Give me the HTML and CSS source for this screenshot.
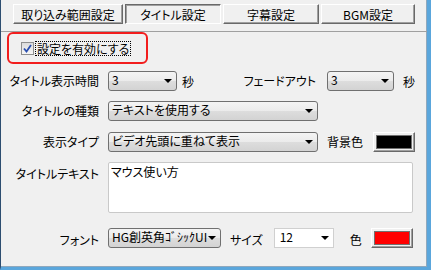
FILE: index.html
```html
<!DOCTYPE html>
<html lang="ja">
<head>
    <meta charset="UTF-8">
    <title>タイトル設定</title>
    <link rel="stylesheet" href="styles.css">
</head>
<body>
    <div class="window">
        <div class="tabs">
            <button class="tab tab-wide">取り込み範囲設定</button>
            <button class="tab tab-on">タイトル設定</button>
            <button class="tab">字幕設定</button>
            <button class="tab tab-last">BGM設定</button>
        </div>

        <div class="enable-box">
            <span class="check">
                <svg width="9" height="9" viewBox="0 0 9 9"><path d="M1 4.5 L3.5 7.5 L8 1" fill="none" stroke="#2a4fb0" stroke-width="1.8"/></svg>
            </span>
            <span class="check-text">設定を有効にする</span>
        </div>

        <div class="row">
            <span class="label">タイトル表示時間</span>
            <div class="combo combo-time"><span>3</span><i class="arrow"></i></div>
            <span class="unit">秒</span>
            <span class="label label-fade">フェードアウト</span>
            <div class="combo combo-fade"><span>3</span><i class="arrow"></i></div>
            <span class="unit unit-fade">秒</span>
        </div>

        <div class="row row-2">
            <span class="label">タイトルの種類</span>
            <div class="combo combo-long"><span>テキストを使用する</span><i class="arrow"></i></div>
        </div>

        <div class="row row-3">
            <span class="label">表示タイプ</span>
            <div class="combo combo-long"><span>ビデオ先頭に重ねて表示</span><i class="arrow"></i></div>
            <span class="side-text">背景色</span>
            <button class="swatch"><span class="swatch-fill black"></span></button>
        </div>

        <div class="row row-text">
            <span class="label label-top">タイトルテキスト</span>
            <div class="textbox">マウス使い方</div>
        </div>

        <div class="row row-font">
            <span class="label label-low">フォント</span>
            <div class="combo combo-font"><span>HG創英角ｺﾞｼｯｸUI</span><i class="arrow"></i></div>
            <span class="side-text label-low">サイズ</span>
            <div class="combo combo-size"><span>12</span><i class="arrow"></i></div>
            <span class="color-text label-low">色</span>
            <button class="swatch"><span class="swatch-fill red"></span></button>
        </div>
    </div>
</body>
</html>
```

FILE: styles.css
```css
body {
    margin: 0;
    padding: 0;
    background-color: #f0f0f0;
    font-family: "Noto Sans CJK JP", "Noto Sans", sans-serif;
    font-size: 12px;
    color: #000000;
}

.window {
    width: 431px;
    height: 270px;
    box-sizing: border-box;
    border-left: 1px solid #2d4d70;
    border-right: 4px solid #5aa6dc;
    border-bottom: 3px solid #5aa6dc;
    box-shadow: inset -1px -1px 0 #8fa8bd;
}

.tabs {
    display: flex;
    gap: 2px;
    height: 32px;
    box-sizing: border-box;
    padding: 4px 0 0 12px;
    border-bottom: 1px solid #a0a0a0;
}

.tab {
    width: 96px;
    height: 20px;
    padding: 0;
    background-color: #f0f0f0;
    border: 1px solid;
    border-color: #ffffff #696969 #696969 #ffffff;
    box-shadow: inset -1px -1px 0 #a0a0a0;
    font-family: inherit;
    font-size: 12px;
    line-height: 17px;
    font-feature-settings: "palt";
}

.tab-wide {
    width: 110px;
}

.tab-on {
    border-color: #696969 #ffffff #ffffff #696969;
    box-shadow: inset 1px 1px 0 #a0a0a0;
}

.tab-last {
    width: 94px;
}

.enable-box {
    display: flex;
    align-items: center;
    width: 141px;
    height: 32px;
    box-sizing: border-box;
    margin-left: 6px;
    padding-left: 12px;
    border: 2px solid #f21d1d;
    border-radius: 6px;
}

.check {
    display: flex;
    align-items: center;
    justify-content: center;
    width: 11px;
    height: 11px;
    border: 1px solid #8e8f8f;
    background: linear-gradient(#dcdcdc, #f6f6f6);
}

.check-text {
    margin-left: 2px;
    padding: 0 1px;
    line-height: 13px;
    outline: 1px dotted #000000;
    font-feature-settings: "palt";
}

.row {
    display: flex;
    align-items: center;
    height: 20px;
    margin-top: 7px;
}

.row-2 {
    margin-top: 10px;
}

.row-3 {
    margin-top: 11px;
}

.row-text {
    align-items: flex-start;
    height: 51px;
    margin-top: 10px;
}

.row-font {
    margin-top: 15px;
}

.label {
    width: 107px;
    box-sizing: border-box;
    padding-right: 9px;
    text-align: right;
    line-height: 14px;
    font-feature-settings: "palt";
}

.label-top {
    padding-top: 5px;
}

.label-low {
    padding-top: 4px;
}

.label-fade {
    width: 133px;
    padding-right: 11px;
}

.unit {
    width: 12px;
    margin-left: 5px;
}

.unit-fade {
    margin-left: 9px;
}

.combo {
    display: flex;
    align-items: center;
    justify-content: space-between;
    height: 20px;
    box-sizing: border-box;
    padding: 0 4px 0 3px;
    border: 1px solid #707070;
    border-radius: 3px;
    background: linear-gradient(#f4f4f4, #ebebeb 50%, #dddddd 51%, #d3d3d3);
    font-feature-settings: "palt";
    line-height: 14px;
    white-space: nowrap;
}

.combo span {
    margin-top: -2px;
}

.combo-time {
    width: 69px;
}

.combo-fade {
    width: 67px;
}

.combo-long {
    width: 210px;
}

.combo-font {
    width: 113px;
}

.combo-size {
    width: 60px;
    margin-left: 11px;
    border-color: #d0d0d0;
    border-radius: 0;
    background: #ffffff;
    padding-left: 5px;
}

.arrow {
    flex-shrink: 0;
    width: 0;
    height: 0;
    border-left: 4px solid transparent;
    border-right: 4px solid transparent;
    border-top: 4px solid #000000;
}

.side-text {
    margin-left: 9px;
    line-height: 14px;
    font-feature-settings: "palt";
}

.color-text {
    margin-left: 16px;
    line-height: 14px;
}

.swatch {
    display: flex;
    width: 42px;
    height: 20px;
    padding: 2px;
    margin-left: 10px;
    box-sizing: border-box;
    background-color: #f0f0f0;
    border: 1px solid;
    border-color: #ffffff #696969 #696969 #ffffff;
    box-shadow: inset -1px -1px 0 #a0a0a0;
}

.row-font .swatch {
    margin-left: 9px;
}

.swatch-fill {
    flex: 1;
    border: 1px solid #707070;
}

.black {
    background-color: #000000;
}

.red {
    background-color: #ff0000;
}

.textbox {
    width: 305px;
    height: 51px;
    box-sizing: border-box;
    padding: 2px 2px;
    background-color: #ffffff;
    border: 1px solid #c9c9c9;
    border-radius: 2px;
    line-height: 14px;
    font-feature-settings: "palt";
}
```
